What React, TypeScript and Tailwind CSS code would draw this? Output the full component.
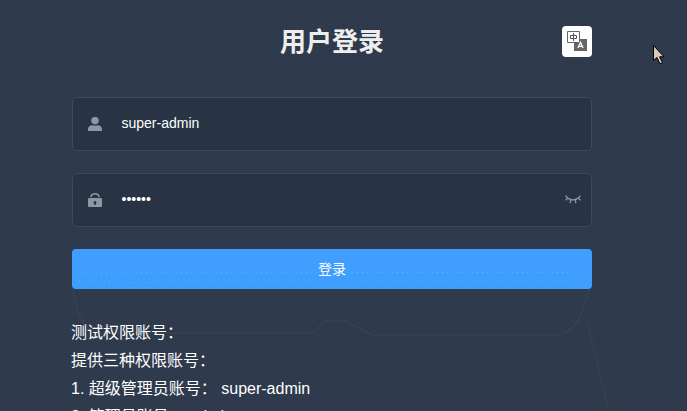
import React from "react";

function UserIcon() {
  return (
    <svg width="14" height="14" viewBox="0 0 14 14" fill="#889aa4">
      <circle cx="7" cy="3.600" r="3.800" />
      <path d="M0 14v-1.600C0 9.600 2 8.500 4.200 8.300c1.800.6 3.800.6 5.600 0C12 8.500 14 9.600 14 12.400V14z" />
    </svg>
  );
}

function LockIcon() {
  return (
    <svg width="14" height="14" viewBox="0 0 14 14" fill="#889aa4">
      <path d="M2.800 4C3.200 1.900 5 .8 7 .8s3.800 1.100 4.200 3.200" fill="none" stroke="#889aa4" strokeWidth="1.600" />
      <path
        fillRule="evenodd"
        d="M1 5h12a1 1 0 0 1 1 1v7a1 1 0 0 1-1 1H1a1 1 0 0 1-1-1V6a1 1 0 0 1 1-1zm6 3a1.500 1.500 0 0 0-.7 2.800V12h1.400v-1.200A1.500 1.500 0 0 0 7 8z"
      />
    </svg>
  );
}

function ClosedEyeIcon() {
  return (
    <svg className="-mt-px" width="16" height="9" viewBox="0 0 16 9" fill="none" stroke="#889aa4" strokeWidth="1.300">
      <path d="M.6.700C2.200 3.300 4.700 4.800 8 4.800S13.800 3.300 15.400.700M3 3 .6 5.200M5.700 4.600 5.200 8.200M10.300 4.600 10.800 8.200M13 3l2.400 2.200" />
    </svg>
  );
}

function LanguageIcon() {
  return (
    <svg className="-mt-px" width="20" height="20" viewBox="0 0 20 20">
      <path d="M7 8h13v12H7z" fill="#666" />
      <path d="M.5.500h12v11H.5z" fill="#fff" stroke="#666" />
      <path d="M3.500 4.500h6v3h-6zM6.500 2v8" fill="none" stroke="#555" />
      <path d="M10.900 17 13.500 11.400 16.100 17M11.900 15.300h3.200" fill="none" stroke="#fff" strokeWidth="1.300" />
    </svg>
  );
}

function Backdrop() {
  return (
    <svg className="absolute inset-0 h-full w-full" viewBox="0 0 687 411" fill="none">
      <defs>
        <pattern id="grain" width="4" height="4" patternUnits="userSpaceOnUse">
          <path d="M0 0h1v1H0zM2 2h1v1H2z" fill="#35435b" fillOpacity=".6" />
        </pattern>
      </defs>
      <path d="M0 0h687v411H0z" fill="url(#grain)" />
      <path
        d="M73 289c3 22 10 44 30 44h210l12-12h20l27 14h188c18-7 22-18 29-46M587 321l22 90"
        stroke="#33414c"
        strokeWidth="2"
      />
    </svg>
  );
}

function Field({ icon, children }: { icon: React.ReactNode; children: React.ReactNode }) {
  return (
    <div className="flex h-[54px] items-center rounded-[5px] border border-[#3e4a57] bg-[#283443] pl-[15px] pr-[10px]">
      {icon}
      {children}
    </div>
  );
}

const accounts = [
  { role: "超级管理员账号：", name: "super-admin" },
  { role: "管理员账号：", name: "admin" },
];

export default function App() {
  return (
    <div className="relative h-[411px] w-full overflow-hidden bg-[#2e394b] font-['Liberation_Sans','Noto_Sans_CJK_SC',sans-serif] text-white">
      <Backdrop />
      <main className="relative ml-[72px] w-[520px] pt-[22px]">
        <header className="relative flex h-[38px] items-center justify-center">
          <h1 className="pt-px text-[26px] font-bold leading-[38px] text-[#eee]">用户登录</h1>
          <button className="absolute right-0 top-1 flex h-[31px] w-[30px] items-center justify-center rounded-[4px] bg-white">
            <LanguageIcon />
          </button>
        </header>
        <form className="mt-[37px] flex flex-col gap-[22px]">
          <Field icon={<UserIcon />}>
            <span className="ml-[19.500px] pb-[2px] text-[14px] leading-5">super-admin</span>
          </Field>
          <Field icon={<LockIcon />}>
            <span className="ml-[19.500px] flex-1 pb-[2px] text-[14px] leading-5">••••••</span>
            <ClosedEyeIcon />
          </Field>
          <button type="button" className="relative h-10 rounded-[4px] bg-[#409eff] text-[14px] leading-5">
            登录
            <svg className="absolute inset-0" width="520" height="40" fill="none" stroke="#42c0ff" strokeDasharray="1 4">
              <path d="M9 24.500h40l8-1h188M280 23.500h223l8 4M7 32.500h35M57 33.500h18l7-1h162M280 33.500l5-1h222" />
            </svg>
          </button>
        </form>
        <section className="-ml-px mt-[30px] text-[16px] leading-7">
          <p>测试权限账号：</p>
          <p>提供三种权限账号：</p>
          {accounts.map((account, index) => (
            <p key={account.name} className="whitespace-pre">
              {index + 1}. {account.role} {account.name}
            </p>
          ))}
        </section>
      </main>
      <svg className="absolute left-[653px] top-[45px]" width="13" height="20" viewBox="0 0 13 20">
        <path d="M.5.500v15l3.500-3 3 6.300 2.500-1.200-3-5.800H11z" fill="#d8c8b8" stroke="#000" />
      </svg>
    </div>
  );
}
